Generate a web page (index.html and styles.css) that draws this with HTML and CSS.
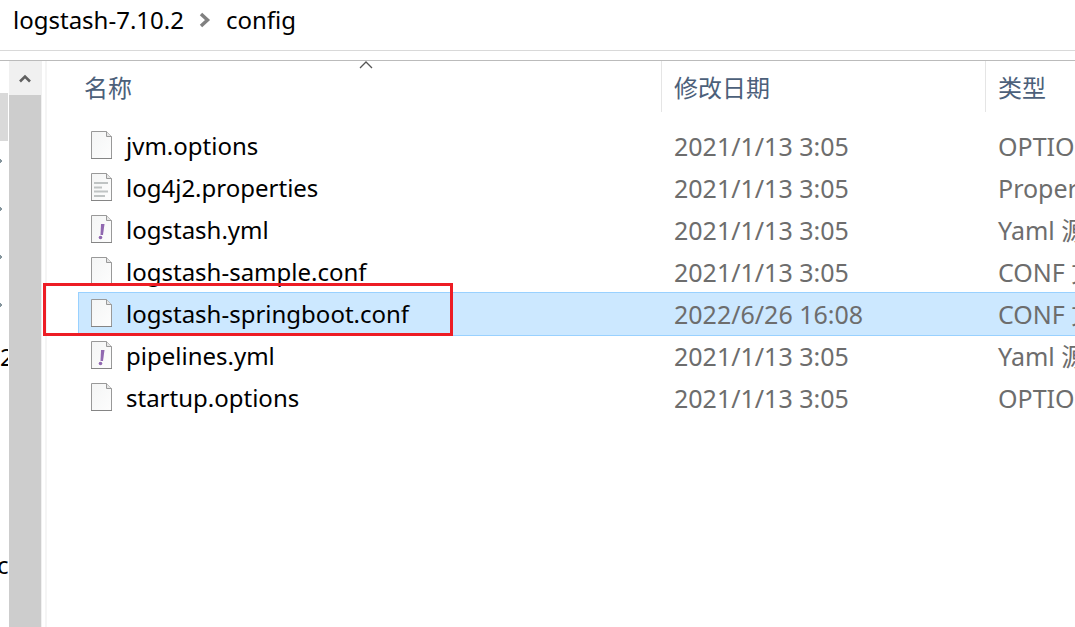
FILE: index.html
```html
<!DOCTYPE html>
<html lang="zh-CN">
<head>
<meta charset="utf-8">
<title>config</title>
<link rel="stylesheet" href="styles.css">
</head>
<body>
<svg class="defs" aria-hidden="true">
  <defs>
    <linearGradient id="paper" x1="0" y1="0" x2="1" y2="1"><stop offset="0" stop-color="#f4f5f5"/><stop offset="1" stop-color="#fdfdfd"/></linearGradient>
    <symbol id="page" viewBox="0 0 22 28">
      <path d="M.5.5h15l5 5v22H.5z" fill="url(#paper)" stroke="#999"/>
      <path d="M15.500.5v5h5" fill="#e6e6e6" stroke="#999"/>
      <path d="M0 27.500h21" stroke="#858585"/>
    </symbol>
    <symbol id="lines" viewBox="0 0 22 28">
      <path d="M3 10h14M3 14.500h8M3 18.500h14M3 23h11" stroke="#bfc3c3" stroke-width="2" fill="none"/>
    </symbol>
    <symbol id="mark" viewBox="0 0 22 28">
      <path d="M10 9h3.500l-1.500 11h-2.500z" fill="#9068b0"/><circle cx="9.500" cy="22.500" r="1.800" fill="#9068b0"/>
    </symbol>
    <symbol id="pin" viewBox="0 0 3 6"><path d="M0 3h2M0 1v4" stroke="#84949c" stroke-width="2"/></symbol>
  </defs>
</svg>
<div class="window">
  <nav class="crumbs" aria-label="路径">
    <a href="#">logstash-7.10.2</a>
    <svg class="crumb-arrow" viewBox="0 0 12 16" aria-hidden="true"><path d="M2 2 8.500 8 2 14" fill="none" stroke="#808080" stroke-width="3.500"/></svg>
    <a href="#">config</a>
  </nav>
  <div class="content">
    <nav class="tree" aria-label="导航">
      <a class="node active" href="#" aria-label="当前"></a>
      <a class="node" href="#" aria-label="固定"><svg class="pin"><use href="#pin"/></svg></a>
      <a class="node" href="#" aria-label="固定"><svg class="pin"><use href="#pin"/></svg></a>
      <a class="node" href="#" aria-label="固定"><svg class="pin"><use href="#pin"/></svg></a>
      <a class="node" href="#" aria-label="固定"><svg class="pin"><use href="#pin"/></svg></a>
      <a class="node" href="#">2</a>
      <div class="spacer"></div>
      <a class="node" href="#"><span class="tail">c</span></a>
    </nav>
    <div class="scrollbar">
      <button class="scroll-up" type="button" aria-label="向上滚动"><svg class="scroll-arrow" viewBox="0 0 12 9"><path d="M1 7.500 6 2.500l5 5" fill="none" stroke="#606060" stroke-width="2.600"/></svg></button>
      <div class="thumb"></div>
    </div>
    <div class="splitter"></div>
    <main class="files">
      <table class="list">
        <colgroup><col><col class="col-date"><col class="col-type"></colgroup>
        <thead>
          <tr>
            <th><button class="head" type="button">名称</button><span class="sort"><svg class="sort-arrow" viewBox="0 0 14 8"><path d="M1 7 7 1l6 6" fill="none" stroke="#555" stroke-width="1.300"/></svg></span></th>
            <th><button class="head" type="button">修改日期</button></th>
            <th><button class="head" type="button">类型</button></th>
          </tr>
        </thead>
        <tbody>
          <tr><td><div class="file"><svg class="icon"><use href="#page"/></svg>jvm.options</div></td><td>2021/1/13 3:05</td><td>OPTIONS 文件</td></tr>
          <tr><td><div class="file"><svg class="icon"><use href="#page"/><use href="#lines"/></svg>log4j2.properties</div></td><td>2021/1/13 3:05</td><td>Properties 源文件</td></tr>
          <tr><td><div class="file"><svg class="icon"><use href="#page"/><use href="#mark"/></svg>logstash.yml</div></td><td>2021/1/13 3:05</td><td>Yaml 源文件</td></tr>
          <tr><td><div class="file"><svg class="icon"><use href="#page"/></svg>logstash-sample.conf</div></td><td>2021/1/13 3:05</td><td>CONF 文件</td></tr>
          <tr class="selected"><td><div class="file"><svg class="icon"><use href="#page"/></svg>logstash-springboot.conf</div><span class="callout"></span></td><td>2022/6/26 16:08</td><td>CONF 文件</td></tr>
          <tr><td><div class="file"><svg class="icon"><use href="#page"/><use href="#mark"/></svg>pipelines.yml</div></td><td>2021/1/13 3:05</td><td>Yaml 源文件</td></tr>
          <tr><td><div class="file"><svg class="icon"><use href="#page"/></svg>startup.options</div></td><td>2021/1/13 3:05</td><td>OPTIONS 文件</td></tr>
        </tbody>
      </table>
    </main>
  </div>
</div>
</body>
</html>
```
FILE: styles.css
```css
* { box-sizing: border-box; }
body {
  margin: 0;
  background: #fff;
  color: #000;
  font: 24px/42px "Noto Sans", "Noto Sans CJK SC", sans-serif;
}
a { color: inherit; text-decoration: none; }
button { border: 0; background: none; font: inherit; }
.defs { position: absolute; width: 0; height: 0; }
.window { display: flex; flex-direction: column; height: 100vh; overflow: hidden; }

.crumbs {
  display: flex;
  align-items: center;
  gap: 15px;
  height: 51px;
  flex: none;
  padding: 0 13px 10px;
  border-bottom: 1px solid #d9d9d9;
}
.crumb-arrow { width: 12px; height: 16px; }

.content {
  display: flex;
  flex: 1;
  min-height: 0;
  margin-top: 9px;
  border-top: 1px solid #bbb;
}
.tree { width: 9px; flex: none; padding-top: 32px; overflow: hidden; }
.node { display: flex; align-items: center; height: 48px; width: 8px; overflow: hidden; }
.active { background: #d9d9d9; }
.pin { width: 3px; height: 6px; margin-bottom: 8px; }
.tail { margin-left: -3px; }
.spacer { height: 160px; }

.scrollbar { display: flex; flex-direction: column; width: 33px; flex: none; background: #f0f0f0; padding-right: 1px; }
.scroll-up { display: flex; align-items: center; justify-content: center; height: 34px; padding: 0; }
.scroll-arrow { width: 12px; height: 9px; }
.thumb { flex: 1; background: #cdcdcd; }
.splitter { width: 2px; flex: none; margin-left: 3px; background: #f5f5f5; }

.files { flex: 1; min-width: 0; padding-left: 32px; }
.list { width: 100%; table-layout: fixed; border-collapse: separate; border-spacing: 0; }
.col-date { width: 324px; }
.col-type { width: 90px; }
th { position: relative; height: 51px; padding: 0; text-align: left; font-weight: 400; border-left: 1px solid #e5e5e5; }
th:first-child { border-left: 0; }
.head { display: block; width: 100%; height: 51px; padding: 2px 0 0 12px; text-align: left; color: #4c607a; }
th:first-child .head { padding-left: 5px; }
.sort { position: absolute; inset: 0 8px auto 0; display: flex; justify-content: center; }
.sort-arrow { width: 14px; height: 8px; }
thead::after { content: ""; display: block; height: 13px; }

td { height: 42px; padding: 0 0 0 13px; color: #6d6d6d; font-size: 25px; white-space: nowrap; overflow: hidden; }
td:first-child { position: relative; padding-left: 12px; color: #000; font-size: 24px; overflow: visible; }
.file { display: flex; align-items: center; gap: 13px; }
.icon { width: 22px; height: 28px; flex: none; margin-bottom: 2px; }
.selected { background: #cce8ff; outline: 1px solid #99d1ff; }
.callout {
  position: absolute;
  top: -10px;
  left: -36px;
  width: 410px;
  height: 53px;
  border: 3px solid #ed1c24;
}
```
